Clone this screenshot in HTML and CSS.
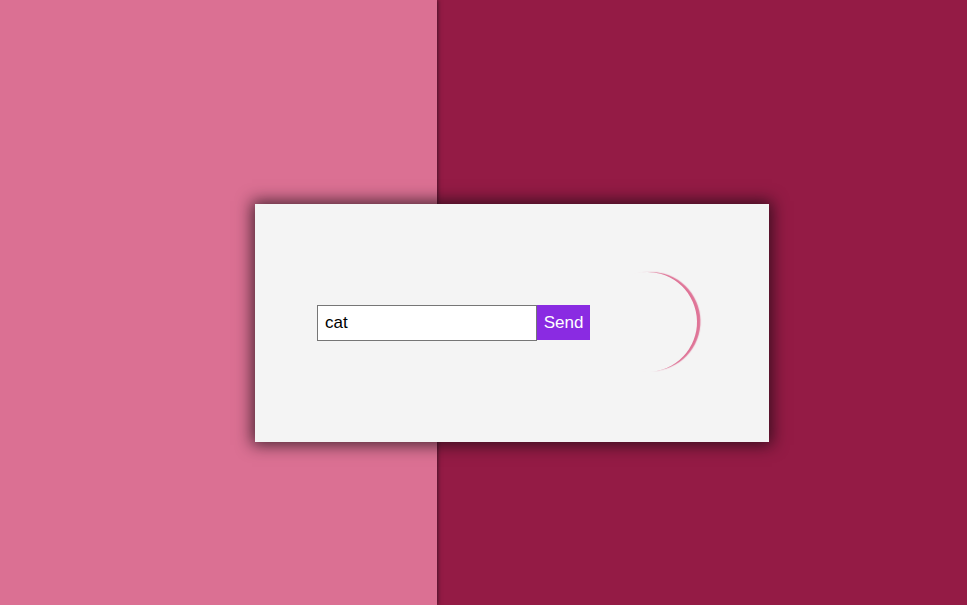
FILE: index.html
```html
<!DOCTYPE html>
<html>
<head>
<meta charset="utf-8">
<link rel="stylesheet" href="styles.css">
</head>
<body>
<div class="split">
  <div class="left"></div>
  <div class="right"></div>
</div>
<div class="card">
  <form class="form" onsubmit="return false">
    <input class="field" type="text" value="cat">
    <button class="send" type="submit">Send</button>
  </form>
  <div class="spinner"></div>
</div>
</body>
</html>
```
FILE: styles.css
```css
html, body {
  margin: 0;
  padding: 0;
  height: 100%;
  overflow: hidden;
}
.split {
  display: flex;
  height: 100%;
}
.left {
  width: 437px;
  background: #db7093;
  position: relative;
  z-index: 1;
  box-shadow: 1px 0 4px rgba(40, 20, 30, 0.75);
}
.right {
  flex: 1;
  background: #941b45;
}
.card {
  position: absolute;
  left: 255px;
  top: 204px;
  width: 514px;
  height: 238px;
  background: #f4f4f4;
  box-shadow: 0 0 15px 3px rgba(20, 10, 15, 0.72);
  z-index: 2;
  display: flex;
  align-items: center;
  box-sizing: border-box;
  padding-left: 62px;
}
.form {
  display: flex;
  align-items: flex-start;
  margin: 0;
}
.field {
  box-sizing: border-box;
  width: 220px;
  height: 36px;
  margin: 0;
  border: 1px solid #767676;
  background: #fff;
  padding: 0 7px;
  font-family: "Liberation Sans", Arial, sans-serif;
  font-size: 17px;
  color: #000;
  outline: none;
}
.send {
  box-sizing: border-box;
  width: 53px;
  height: 35px;
  margin: 0;
  border: none;
  padding: 0;
  background: #8a2be2;
  color: #fff;
  font-family: "Liberation Sans", Arial, sans-serif;
  font-size: 17px;
}
.spinner {
  width: 100px;
  height: 100px;
  border-radius: 50%;
  margin-left: 7px;
  margin-top: -2px;
  box-shadow: 4px 0 1px -0.5px #df7497;
  transform: rotate(-7deg);
}
```
